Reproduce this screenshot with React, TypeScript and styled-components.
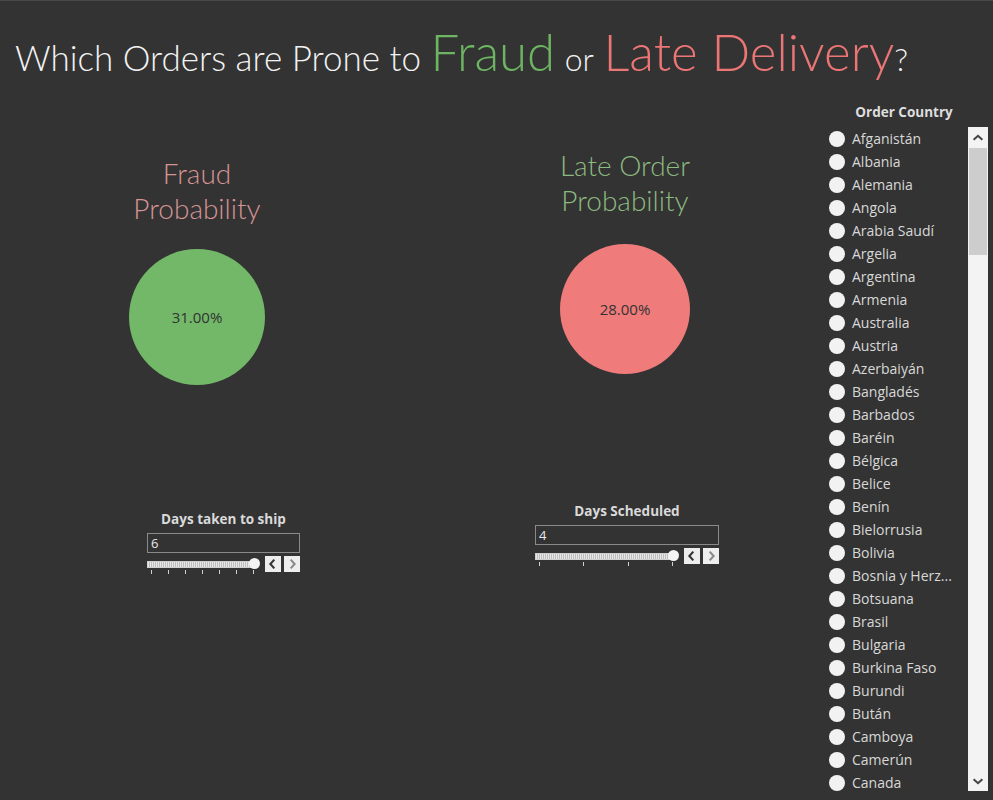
import React from "react";
import styled, { createGlobalStyle } from "styled-components";

const GlobalStyle = createGlobalStyle`
  html, body { margin: 0; padding: 0; background: #333333; }
  #root { height: 800px; }
`;

const Page = styled.div`
  display: flex;
  width: 993px;
  height: 800px;
  box-sizing: border-box;
  background: #333333;
  border-top: 1px solid #4a4a4a;
  overflow: hidden;
  font-family: Lato, "Open Sans", sans-serif;
`;

const Main = styled.div`
  flex: 0 0 820px;
  min-width: 0;
  display: flex;
  flex-direction: column;
`;

const Title = styled.h1`
  margin: 0;
  height: 99px;
  box-sizing: border-box;
  padding: 21px 0 0 15px;
  font-weight: 300;
  font-size: 35px;
  line-height: 60px;
  color: #f2f2f2;
  white-space: nowrap;
`;

const Accent = styled.span<{ $color: string }>`
  font-size: 51px;
  color: ${(p) => p.$color};
`;

const Small = styled.span`
  font-size: 32px;
`;

const Charts = styled.div`
  display: grid;
  grid-template-columns: 260px 260px;
  column-gap: 168px;
  padding-left: 67px;
`;

const Column = styled.div<{ $top: number }>`
  display: flex;
  flex-direction: column;
  align-items: center;
  padding-top: ${(p) => p.$top}px;
`;

const Heading = styled.div<{ $color: string }>`
  font-size: 28px;
  line-height: 35px;
  font-weight: 300;
  text-align: center;
  color: ${(p) => p.$color};
`;

const Bubble = styled.div<{ $size: number; $color: string; $gap: number }>`
  width: ${(p) => p.$size}px;
  height: ${(p) => p.$size}px;
  margin-top: ${(p) => p.$gap}px;
  border-radius: 50%;
  background: ${(p) => p.$color};
  display: flex;
  align-items: center;
  justify-content: center;
  font-family: "Open Sans", sans-serif;
  font-size: 15px;
  color: #333;
`;

const SliderBox = styled.div<{ $width: number; $left: number; $gap: number }>`
  align-self: flex-start;
  width: ${(p) => p.$width}px;
  margin-left: ${(p) => p.$left}px;
  margin-top: ${(p) => p.$gap}px;
  display: flex;
  flex-direction: column;
`;

const SliderLabel = styled.div`
  font-family: "Open Sans", sans-serif;
  font-weight: 700;
  font-size: 13.5px;
  line-height: 18px;
  color: #dadada;
  text-align: center;
  margin-bottom: 5px;
`;

const ValueInput = styled.div`
  height: 20px;
  box-sizing: border-box;
  border: 1px solid #8a8a8a;
  padding-left: 3px;
  font-family: "Open Sans", sans-serif;
  font-size: 13px;
  line-height: 18px;
  color: #e8e8e8;
`;

const SliderRow = styled.div`
  display: flex;
  align-items: flex-start;
  gap: 3px;
  margin-top: 3px;
`;

const TrackArea = styled.div`
  flex: 1;
  margin-right: 5px;
  display: flex;
  flex-direction: column;
`;

const Track = styled.div`
  position: relative;
  height: 5px;
  margin-top: 5px;
  margin-right: 2px;
  background: repeating-linear-gradient(90deg, #e8e8e8 0 1px, #bdbdbd 1px 2px);
  border: 1px solid #cfcfcf;
`;

const Thumb = styled.div`
  position: absolute;
  right: -6px;
  top: -4px;
  width: 11px;
  height: 11px;
  border-radius: 50%;
  background: #f4f4f4;
`;

const Ticks = styled.div`
  display: flex;
  justify-content: space-between;
  padding: 0 3px 0 4px;
  margin-top: 2px;
`;

const Tick = styled.span`
  width: 1px;
  height: 4px;
  background: #d0d0d0;
`;

const StepButton = styled.div<{ $dim?: boolean }>`
  width: 16px;
  height: 16px;
  background: #eeeeee;
  display: flex;
  align-items: center;
  justify-content: center;
  color: ${(p) => (p.$dim ? "#8a8a8a" : "#333")};
`;

const Side = styled.div`
  flex: 0 0 173px;
  display: flex;
  flex-direction: column;
  padding-top: 100px;
  box-sizing: border-box;
`;

const SideTitle = styled.div`
  font-family: "Open Sans", sans-serif;
  font-weight: 700;
  font-size: 13.5px;
  line-height: 22px;
  color: #dedede;
  text-align: center;
  padding-right: 5px;
  margin-bottom: 4px;
`;

const ListWrap = styled.div`
  display: flex;
  height: 664px;
`;

const List = styled.div`
  flex: 1;
  min-width: 0;
  overflow: hidden;
  padding-left: 9px;
`;

const Item = styled.div`
  display: flex;
  align-items: center;
  height: 23px;
  gap: 7px;
  font-family: "Open Sans", sans-serif;
  font-size: 14px;
  color: #d8d8d8;
  white-space: nowrap;
`;

const Radio = styled.span`
  width: 16px;
  height: 16px;
  border-radius: 50%;
  background: #f2f2f2;
  flex-shrink: 0;
`;

const Scrollbar = styled.div`
  flex: 0 0 20px;
  margin-right: 5px;
  display: flex;
  flex-direction: column;
  background-color: #f3f3f3;
  background-image: radial-gradient(#c9c9c9 0.6px, transparent 0.7px);
  background-size: 4px 4px;
`;

const ScrollButton = styled.div`
  height: 21px;
  display: flex;
  align-items: center;
  justify-content: center;
  color: #444;
`;

const ScrollThumb = styled.div`
  height: 107px;
  margin: 0 1px;
  background: #cdcdcd;
`;

const ScrollSpace = styled.div`
  flex: 1;
`;

const Chevron = ({ dir }: { dir: "left" | "right" | "up" | "down" }) => {
  const paths: Record<string, string> = {
    left: "M9.5 3 L5 8 L9.5 13",
    right: "M6.5 3 L11 8 L6.5 13",
    up: "M3 10 L8 5.5 L13 10",
    down: "M3 6 L8 10.5 L13 6",
  };
  return (
    <svg width="14" height="14" viewBox="0 0 16 16">
      <path d={paths[dir]} fill="none" stroke="currentColor" strokeWidth="2.4" />
    </svg>
  );
};

const countries = [
  "Afganistán", "Albania", "Alemania", "Angola", "Arabia Saudí", "Argelia",
  "Argentina", "Armenia", "Australia", "Austria", "Azerbaiyán", "Bangladés",
  "Barbados", "Baréin", "Bélgica", "Belice", "Benín", "Bielorrusia", "Bolivia",
  "Bosnia y Herz...", "Botsuana", "Brasil", "Bulgaria", "Burkina Faso",
  "Burundi", "Bután", "Camboya", "Camerún", "Canada",
];

const Slider = ({
  label, value, width, left, gap, ticks,
}: { label: string; value: string; width: number; left: number; gap: number; ticks: number }) => (
  <SliderBox $width={width} $left={left} $gap={gap}>
    <SliderLabel>{label}</SliderLabel>
    <ValueInput>{value}</ValueInput>
    <SliderRow>
      <TrackArea>
        <Track>
          <Thumb />
        </Track>
        <Ticks>
          {Array.from({ length: ticks }).map((_, i) => (
            <Tick key={i} />
          ))}
        </Ticks>
      </TrackArea>
      <StepButton><Chevron dir="left" /></StepButton>
      <StepButton $dim><Chevron dir="right" /></StepButton>
    </SliderRow>
  </SliderBox>
);

export default function App() {
  return (
    <>
      <GlobalStyle />
      <Page>
        <Main>
          <Title>
            Which Orders are Prone to <Accent $color="#6db563">Fraud</Accent>{" "}
            <Small>or</Small> <Accent $color="#ec7575">Late Delivery</Accent>
            <Small>?</Small>
          </Title>
          <Charts>
            <Column $top={56}>
              <Heading $color="#d69494">Fraud<br />Probability</Heading>
              <Bubble $size={136} $color="#72b868" $gap={23}>31.00%</Bubble>
              <Slider label="Days taken to ship" value="6" width={153} left={80} gap={125} ticks={7} />
            </Column>
            <Column $top={48}>
              <Heading $color="#8dba80">Late Order<br />Probability</Heading>
              <Bubble $size={130} $color="#ef7b7b" $gap={26}>28.00%</Bubble>
              <Slider label="Days Scheduled" value="4" width={184} left={40} gap={128} ticks={4} />
            </Column>
          </Charts>
        </Main>
        <Side>
          <SideTitle>Order Country</SideTitle>
          <ListWrap>
            <List>
              {countries.map((c) => (
                <Item key={c}>
                  <Radio />
                  {c}
                </Item>
              ))}
            </List>
            <Scrollbar>
              <ScrollButton><Chevron dir="up" /></ScrollButton>
              <ScrollThumb />
              <ScrollSpace />
              <ScrollButton><Chevron dir="down" /></ScrollButton>
            </Scrollbar>
          </ListWrap>
        </Side>
      </Page>
    </>
  );
}
